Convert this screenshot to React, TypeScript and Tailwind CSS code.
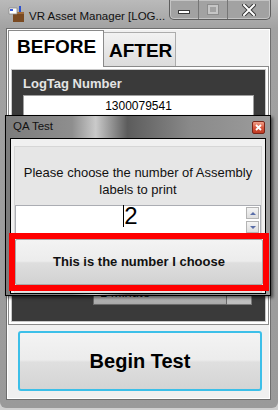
import React from 'react';

function AppIcon() {
  return (
    <svg width="16" height="16" viewBox="0 0 16 16">
      <rect x="5" y="6" width="11" height="10" fill="#7a4a22" />
      <rect x="5" y="6" width="11" height="2" fill="#a06a3a" />
      <path d="M1 2 L9 2 L9 8 L1 8 Z" fill="#ffffff" stroke="#8a8a8a" strokeWidth="0.8" />
      <rect x="2" y="3" width="3" height="2" fill="#3a5ad8" />
      <rect x="11" y="0" width="2" height="6" fill="#2a4fd0" />
    </svg>
  );
}

function WindowButtons() {
  return (
    <div className="flex h-[20px] overflow-hidden rounded-b-[5px] border border-t-0 border-[#5e5e5e] bg-[#a2a2a2] shadow-[inset_0_0_0_1px_#c4c4c4]">
      <div className="flex w-[28px] items-center justify-center pt-[5px]">
        <div className="h-[4px] w-[12px] border border-[#3a3a3a] bg-white" />
      </div>
      <div className="flex w-[29px] items-center justify-center border-l border-[#767676]">
        <div className="h-[9px] w-[10px] border-2 border-[#c6c6c6] shadow-[0_0_0_1px_#8c8c8c]" />
      </div>
      <div className="flex w-[43px] items-center justify-center border-l border-[#767676]">
        <svg width="14" height="12" viewBox="0 0 14 12">
          <path d="M2 1 L12 11 M12 1 L2 11" stroke="#3a3a3a" strokeWidth="4" strokeLinecap="square" />
          <path d="M2 1 L12 11 M12 1 L2 11" stroke="#ffffff" strokeWidth="2" strokeLinecap="square" />
        </svg>
      </div>
    </div>
  );
}

function QaDialog() {
  return (
    <div className="absolute left-[5px] top-[115px] flex h-[181px] w-[266px] flex-col border border-black bg-[linear-gradient(90deg,#7c7c7c_0%,#8e8e8e_25%,#cacaca_34%,#5c5c5c_46%,#8a8a8a_70%,#9c9c9c_100%)] shadow-[2px_2px_3px_rgba(0,0,0,0.55)]">
      {/* title */}
      <div className="flex h-[22px] items-center pl-[7px] pr-[5px]">
        <span className="text-[11.5px] text-[#111]">QA Test</span>
        <div className="ml-auto flex h-[13px] w-[13px] items-center justify-center rounded-[2px] border border-[#7a2418] bg-[linear-gradient(180deg,#f0a08a_0%,#d8573e_50%,#c03a22_100%)]">
          <svg width="7" height="7" viewBox="0 0 7 7">
            <path d="M1 1 L6 6 M6 1 L1 6" stroke="#ffffff" strokeWidth="1.8" />
          </svg>
        </div>
      </div>

      {/* client */}
      <div className="mx-[4px] mb-[1px] flex flex-1 flex-col border border-black bg-[#f0f0f0]">
        <div className="mx-[3px] mt-[7px] flex flex-1 flex-col border border-[#d6d6d6] bg-[#e6e6e6]">
          <p className="pt-[17px] text-center text-[13px] leading-[17px] text-[#111]">
            Please choose the number of Assembly
            <br />
            labels to print
          </p>
          <div className="mt-[7px] flex h-[30px] border border-[#abadb3] bg-white">
            <div className="flex flex-1 items-center justify-center pb-[9px]">
              <span className="relative text-[24px] leading-none text-black">
                <span className="absolute -left-[1px] top-[1px] h-[22px] w-px bg-black" />
                2
              </span>
            </div>
            <div className="flex w-[14px] flex-col gap-[2px] py-px pr-px">
              <div className="flex flex-1 items-center justify-center border border-[#b4b4b4] bg-[linear-gradient(180deg,#f4f4f4,#dedede)]">
                <div className="h-0 w-0 border-x-[3px] border-b-[3px] border-x-transparent border-b-[#5a6ea8]" />
              </div>
              <div className="flex flex-1 items-center justify-center border border-[#b4b4b4] bg-[linear-gradient(180deg,#f4f4f4,#dedede)]">
                <div className="h-0 w-0 border-x-[3px] border-t-[3px] border-x-transparent border-t-[#5a6ea8]" />
              </div>
            </div>
          </div>
        </div>
      </div>

      {/* red highlight around the confirm button */}
      <div className="absolute left-[3px] top-[117px] flex h-[58px] w-[260px] border-[6px] border-[#ff0000]">
        <button className="flex flex-1 items-center justify-center rounded-[2px] border border-[#a8a8a8] bg-[linear-gradient(180deg,#f3f3f3_0%,#ececec_48%,#dedede_52%,#d2d2d2_100%)] text-[13px] font-bold text-[#111]">
          This is the number I choose
        </button>
      </div>
    </div>
  );
}

export default function App() {
  return (
    <div className="relative h-[410px] w-[278px] overflow-hidden bg-[#d0d0d0] font-['Liberation_Sans',Arial,sans-serif]">
      {/* main window */}
      <div className="flex h-[408px] flex-col rounded-b-[6px] bg-[linear-gradient(180deg,#bababa_0px,#a2a2a2_28px,#9a9a9a_100%)]">
        <div className="flex h-[29px] items-start">
          <div className="ml-[8px] mt-[6px]">
            <AppIcon />
          </div>
          <span className="ml-[5px] mt-[8px] text-[11.5px] text-[#111]">VR Asset Manager [LOG...</span>
          <div className="ml-auto mr-[7px]">
            <WindowButtons />
          </div>
        </div>

        <div className="ml-[7px] mr-[8px] flex h-[370px] flex-col border border-white bg-[#f0f0f0] shadow-[0_0_0_1px_#6e6e6e]">
          {/* tabs */}
          <div className="flex h-[36px] items-end">
            <div className="relative z-10 -mb-px h-[37px] w-[96px] border border-b-0 border-[#8a8a8a] bg-white pl-[8px] pt-[6px] text-[19px] font-bold leading-none text-black">
              BEFORE
            </div>
            <div className="h-[34px] w-[72px] border border-b-0 border-l-0 border-[#acacac] bg-[linear-gradient(180deg,#f2f2f2,#dcdcdc)] pl-[5px] pt-[8px] text-[19px] font-bold leading-none text-black">
              AFTER
            </div>
          </div>

          {/* tab page */}
          <div className="flex h-[259px] flex-col border border-[#8a8a8a] bg-white p-[2px]">
            <div className="flex flex-1 flex-col border border-[#c8c8c8] bg-[#3a3a3a] px-[11px] pt-[6px]">
              <span className="text-[13px] font-bold leading-[15px] text-[#e4e4e4]">LogTag Number</span>
              <div className="mt-[4px] flex h-[22px] items-center justify-center border border-[#a0a0a0] bg-white text-[12px] text-black">
                1300079541
              </div>
              <div className="flex-1" />
              <div className="mb-[16px] ml-[70px] flex h-[24px] w-[159px]">
                <div className="flex w-[134px] items-center border border-[#6a6a6a] bg-[linear-gradient(180deg,#e2e2e2,#a8a8a8)] pl-[6px] text-[13px] text-[#111]">
                  1 Minute
                </div>
                <div className="flex-1 border border-l-0 border-[#7a7a7a] bg-[linear-gradient(180deg,#dadada,#bdbdbd)]" />
              </div>
            </div>
          </div>

          <button className="ml-[10px] mr-[7px] mt-[6px] flex h-[60px] items-center justify-center rounded-[3px] border-2 border-[#3cbfe8] bg-[linear-gradient(180deg,#f3f3f3_0%,#ececec_48%,#dfdfdf_52%,#d4d4d4_100%)] text-[20px] font-bold text-black">
            Begin Test
          </button>
        </div>
      </div>

      <QaDialog />
    </div>
  );
}
